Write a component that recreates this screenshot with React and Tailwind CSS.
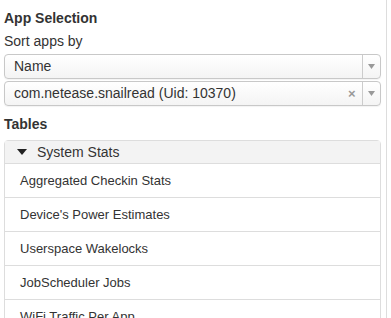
import React from 'react';

const rows = [
  'Aggregated Checkin Stats',
  "Device's Power Estimates",
  'Userspace Wakelocks',
  'JobScheduler Jobs',
  'WiFi Traffic Per App',
];

function Caret() {
  return (
    <svg width="7" height="5" viewBox="0 0 7 5" className="fill-[#999]">
      <path d="M0 0h7L3.5 5z" />
    </svg>
  );
}

function Select({ value, clearable = false }) {
  return (
    <div className="flex h-[25px] items-stretch rounded-[4px] border border-[#c8c8c8] bg-gradient-to-b from-white to-[#f4f4f4] shadow-[0_1px_1px_rgba(0,0,0,0.05)]">
      <div className="flex flex-1 items-center pl-[9px] text-[14px] text-[#333]">{value}</div>
      {clearable && (
        <div className="flex w-[14px] items-center justify-start text-[13px] font-bold text-[#999] leading-none">×</div>
      )}
      <div className="flex w-[18px] items-center justify-center border-l border-[#ccc]">
        <Caret />
      </div>
    </div>
  );
}

export default function App() {
  return (
    <div className="h-[318px] w-[387px] overflow-hidden border-r border-[#ddd] bg-white pl-[4px] pr-[5px] pt-[8px] font-['Liberation_Sans',Arial,sans-serif] text-[#333]">
      <div className="text-[14px] font-bold leading-[20px]">App Selection</div>
      <div className="mt-[3px] text-[14px] leading-[20px]">Sort apps by</div>

      <div className="mt-[3px] flex flex-col gap-[2px]">
        <Select value="Name" />
        <Select value="com.netease.snailread (Uid: 10370)" clearable />
      </div>

      <div className="mt-[8px] text-[14px] font-bold leading-[20px]">Tables</div>

      <div className="mt-[6px] rounded-t-[4px] border border-[#ddd]">
        <div className="flex h-[23px] items-center gap-[10px] border-b border-[#ddd] bg-[#f3f3f3] pl-[12px] text-[14px]">
          <svg width="10" height="6" viewBox="0 0 10 6" className="fill-[#222]">
            <path d="M0 0h10L5 6z" />
          </svg>
          System Stats
        </div>
        {rows.map(r => (
          <div key={r} className="flex h-[34px] items-center border-b border-[#ddd] pl-[15px] text-[13px]">
            {r}
          </div>
        ))}
      </div>
    </div>
  );
}
